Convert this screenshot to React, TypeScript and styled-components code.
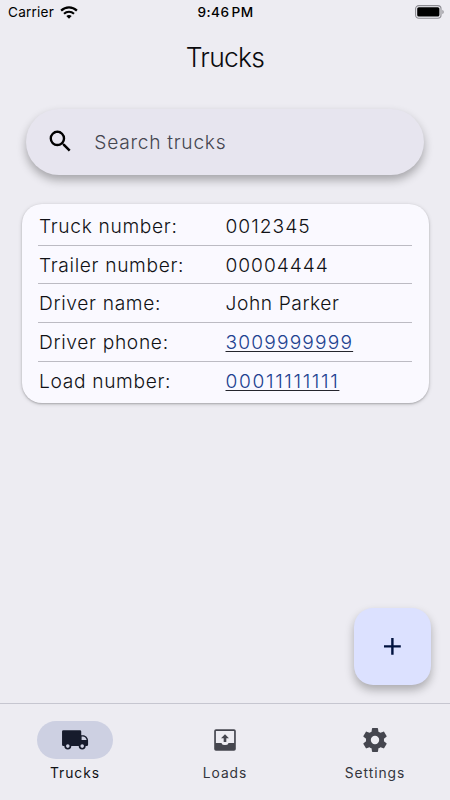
import React from "react";
import styled, { createGlobalStyle } from "styled-components";
import { MdAdd, MdSearch } from "react-icons/md";

const GlobalStyle = createGlobalStyle`
  * { box-sizing: border-box; }
  body { margin: 0; background: #edecf2; }
`;

const Screen = styled.div`
  position: relative;
  display: flex;
  flex-direction: column;
  width: 450px;
  height: 800px;
  overflow: hidden;
  background: #edecf2;
  color: #111216;
  font-family: Inter, "Liberation Sans", sans-serif;
`;

const StatusBar = styled.div`
  display: grid;
  grid-template-columns: 1fr auto 1fr;
  align-items: center;
  height: 24px;
  padding: 0 6px 0 8px;
  color: #000;
  font-size: 13.6px;
`;

const Carrier = styled.div`
  display: flex;
  align-items: center;
  gap: 5.5px;
  letter-spacing: 0.22px;
`;

const Clock = styled.div`
  margin-right: 1px;
  font-weight: 500;
  font-size: 13.6px;
  letter-spacing: 0.45px;
  word-spacing: -2px;
`;

const BatterySlot = styled.div`
  display: flex;
  justify-content: flex-end;
`;

const Title = styled.h1`
  margin: 0;
  height: 67px;
  line-height: 67px;
  text-align: center;
  font-size: 26.4px;
  font-weight: 300;
  letter-spacing: -0.7px;
  color: #0b0b0e;
`;

const SearchField = styled.div`
  display: flex;
  align-items: center;
  flex: none;
  gap: 20px;
  height: 66px;
  margin: 18px 26px 0;
  padding: 0 19.5px;
  border-radius: 33px;
  background: #e7e5ef;
  color: #45464f;
  font-size: 19.2px;
  font-weight: 300;
  letter-spacing: 0.72px;
  box-shadow: 0 5px 10px rgba(0, 0, 0, 0.3);

  svg { color: #000; margin-bottom: 1px; }
`;

const Card = styled.dl`
  flex: none;
  margin: 29px 21.5px 0;
  padding: 3px 17px 0 16.5px;
  height: 198.7px;
  border-radius: 20px;
  background: #faf9ff;
  box-shadow: 0 1px 4px rgba(0, 0, 0, 0.16), 0 1px 2px rgba(0, 0, 0, 0.2);
`;

const Row = styled.div`
  display: grid;
  grid-template-columns: 187.5px 1fr;
  align-items: center;
  height: 38.7px;
  border-bottom: 1px solid #bcbbc3;
  font-size: 19.2px;
  font-weight: 300;
  letter-spacing: 0.66px;

  &:last-child { border-bottom: 0; }
`;

const Label = styled.dt`
  padding-left: 1px;
`;

const Value = styled.dd<{ $tracking: number }>`
  margin: 0;
  letter-spacing: ${(p) => p.$tracking}px;
`;

const Link = styled.a`
  color: #21418f;
  text-decoration: underline;
  text-decoration-color: #24252d;
  text-decoration-thickness: 1px;
  text-underline-offset: 2px;
  text-decoration-skip-ink: none;
`;

const AddButton = styled.button`
  position: absolute;
  left: 354px;
  top: 608px;
  display: grid;
  place-items: center;
  width: 77px;
  height: 77px;
  padding: 0;
  border: 0;
  border-radius: 19.2px;
  background: #dce1ff;
  color: #00123f;
  box-shadow: 0 5px 10px rgba(0, 0, 0, 0.28);
`;

const TabBar = styled.nav`
  display: grid;
  grid-template-columns: repeat(3, 1fr);
  height: 97px;
  margin-top: auto;
  border-top: 1px solid #c6c6d0;
`;

const Tab = styled.div<{ $active?: boolean }>`
  display: flex;
  flex-direction: column;
  align-items: center;
  padding-top: 17px;
  color: ${(p) => (p.$active ? "#111216" : "#34353c")};
  font-size: 13.8px;
  letter-spacing: 0.95px;
`;

const Pill = styled.div<{ $active?: boolean }>`
  display: grid;
  place-items: center;
  width: 76.8px;
  height: 38px;
  margin-bottom: 6px;
  border-radius: 19px;
  background: ${(p) => (p.$active ? "#cdd0e2" : "transparent")};
  color: ${(p) => (p.$active ? "#161b2c" : "#45464f")};
`;

const WifiIcon = () => (
  <svg width="18" height="13" viewBox="0 0 18 13" fill="none" stroke="#000">
    <path d="M1.1 4.6C5.6 0.3 12.4 0.3 16.9 4.6" strokeWidth="2.2" />
    <path d="M4 7.7C6.9 5 11.1 5 14 7.7" strokeWidth="2.1" />
    <path d="M6.3 9.9Q9 7.9 11.7 9.9L9 12.7Z" fill="#000" stroke="none" />
  </svg>
);

const BatteryIcon = () => (
  <svg width="29" height="14" viewBox="0 0 29 14">
    <rect x="0.6" y="0.6" width="25.4" height="12.6" rx="3.2" fill="none" stroke="#8d8c92" strokeWidth="1.1" />
    <rect x="2.2" y="2.2" width="22.2" height="9.4" rx="1.6" fill="#000" />
    <path d="M27.3 4.8Q28.8 5.5 28.8 7T27.3 9.2Z" fill="#98979d" />
  </svg>
);

const TabIcon = ({ children }: { children: React.ReactNode }) => (
  <svg width="30" height="30" viewBox="-0.5 -0.5 25 25" fill="currentColor" fillRule="evenodd">
    {children}
  </svg>
);

const TruckIcon = () => (
  <TabIcon>
    <path d="M2.3 3.8H16.1Q17.2 3.8 17.2 4.9V8H18.7C20.9 8 22.9 10.1 22.9 12.4V15.9Q22.9 17.1 21.7 17.1H20.9A2.9 2.9 0 0 1 15.1 17.1H8.9A2.9 2.9 0 0 1 3.1 17.1H2.3Q1.2 17.1 1.2 16V4.9Q1.2 3.8 2.3 3.8ZM17.5 9.1V12.1H21.7C21.4 10.4 20.1 9.1 18.5 9.1ZM6 15.6A1.5 1.5 0 1 0 6 18.6A1.5 1.5 0 1 0 6 15.6ZM18 15.6A1.5 1.5 0 1 0 18 18.6A1.5 1.5 0 1 0 18 15.6Z" />
  </TabIcon>
);

const OutboxIcon = () => (
  <TabIcon>
    <path d="M4.5 3H19.5Q21 3 21 4.5V19.5Q21 21 19.5 21H4.5Q3 21 3 19.5V4.5Q3 3 4.5 3ZM4.4 4.5V14.4H9A3.1 2.5 0 0 0 15 14.4H19.6V4.5Z" />
    <path d="M12 7.2L15.3 10.5H13.1V13.7H10.9V10.5H8.7Z" />
  </TabIcon>
);

const CogIcon = () => (
  <TabIcon>
    <path d="M12 15.5A3.5 3.5 0 0 1 8.5 12 3.5 3.5 0 0 1 12 8.5 3.5 3.5 0 0 1 15.5 12 3.5 3.5 0 0 1 12 15.5M19.43 12.97C19.47 12.65 19.5 12.33 19.5 12S19.47 11.34 19.43 11L21.54 9.37C21.73 9.22 21.78 8.95 21.66 8.73L19.66 5.27C19.54 5.05 19.27 4.96 19.05 5.05L16.56 6.05C16.04 5.66 15.5 5.32 14.87 5.07L14.5 2.42C14.46 2.18 14.25 2 14 2H10C9.75 2 9.54 2.18 9.5 2.42L9.13 5.07C8.5 5.32 7.96 5.66 7.44 6.05L4.95 5.05C4.73 4.96 4.46 5.05 4.34 5.27L2.34 8.73C2.21 8.95 2.27 9.22 2.46 9.37L4.57 11C4.53 11.34 4.5 11.67 4.5 12S4.53 12.65 4.57 12.97L2.46 14.63C2.27 14.78 2.21 15.05 2.34 15.27L4.34 18.73C4.46 18.95 4.73 19.03 4.95 18.95L7.44 17.94C7.96 18.34 8.5 18.68 9.13 18.93L9.5 21.58C9.54 21.82 9.75 22 10 22H14C14.25 22 14.46 21.82 14.5 21.58L14.87 18.93C15.5 18.67 16.04 18.34 16.56 17.94L19.05 18.95C19.27 19.03 19.54 18.95 19.66 18.73L21.66 15.27C21.78 15.05 21.73 14.78 21.54 14.63L19.43 12.97Z" />
  </TabIcon>
);

const truck = [
  { label: "Truck number:", value: "0012345", tracking: 1 },
  { label: "Trailer number:", value: "00004444", tracking: 0.95 },
  { label: "Driver name:", value: "John Parker", tracking: 0.58 },
  { label: "Driver phone:", value: "3009999999", tracking: 1.15, link: true },
  { label: "Load number:", value: "00011111111", tracking: 1.63, link: true },
];

export default function App() {
  return (
    <Screen>
      <GlobalStyle />
      <StatusBar>
        <Carrier>
          Carrier
          <WifiIcon />
        </Carrier>
        <Clock>9:46 PM</Clock>
        <BatterySlot>
          <BatteryIcon />
        </BatterySlot>
      </StatusBar>
      <Title>Trucks</Title>
      <SearchField>
        <MdSearch size={28.8} />
        Search trucks
      </SearchField>
      <Card>
        {truck.map((field) => (
          <Row key={field.label}>
            <Label>{field.label}</Label>
            <Value $tracking={field.tracking}>
              {field.link ? <Link>{field.value}</Link> : field.value}
            </Value>
          </Row>
        ))}
      </Card>
      <TabBar>
        <Tab $active>
          <Pill $active>
            <TruckIcon />
          </Pill>
          Trucks
        </Tab>
        <Tab>
          <Pill>
            <OutboxIcon />
          </Pill>
          Loads
        </Tab>
        <Tab>
          <Pill>
            <CogIcon />
          </Pill>
          Settings
        </Tab>
      </TabBar>
      <AddButton aria-label="Add truck">
        <MdAdd size={28.8} />
      </AddButton>
    </Screen>
  );
}
